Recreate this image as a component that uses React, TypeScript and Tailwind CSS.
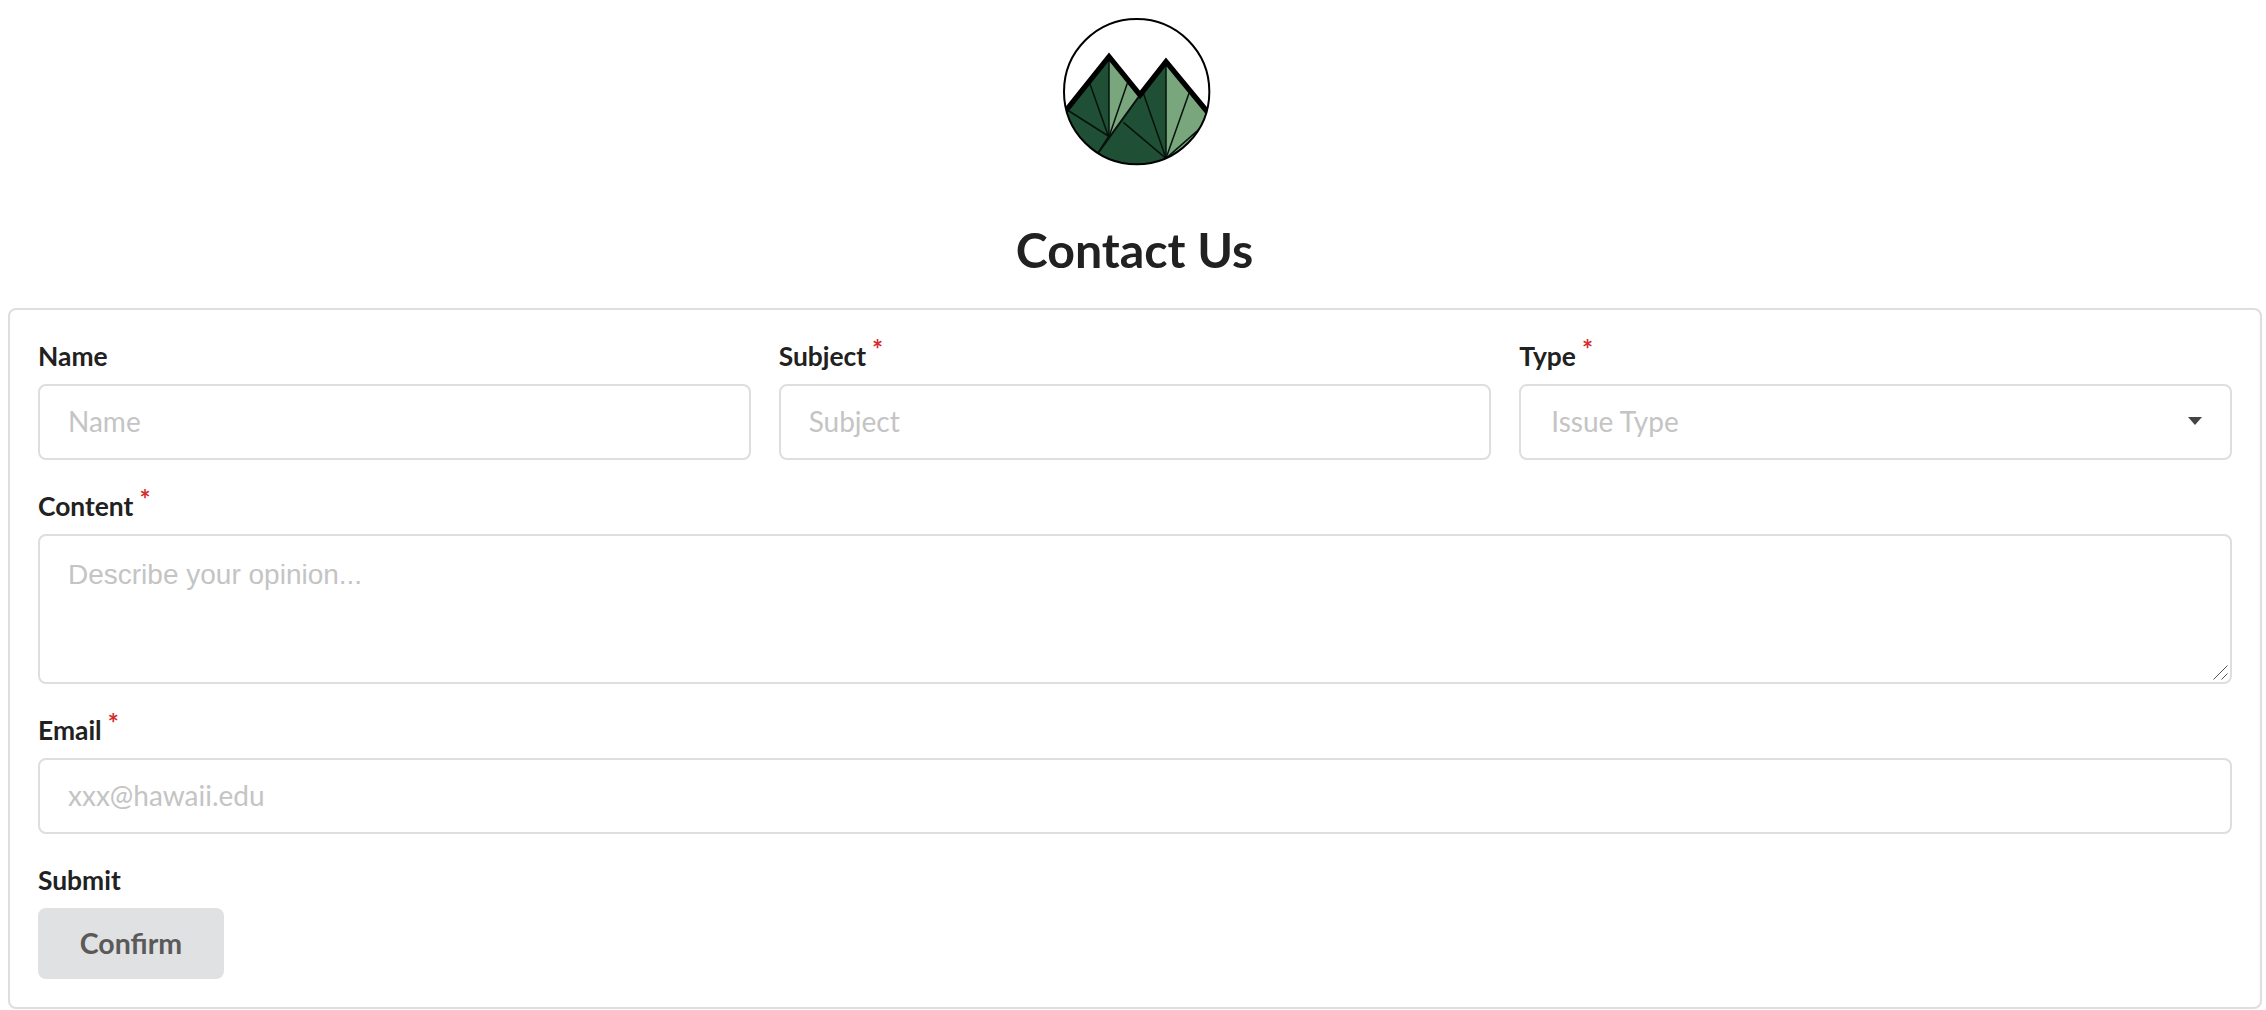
import React from 'react';

const Logo = () => (
    <svg width="180" height="180" viewBox="9 0 540 540" className="block">
        <defs>
            <clipPath id="logoClip">
                <circle cx="290" cy="275" r="218" />
            </clipPath>
        </defs>
        <g clipPath="url(#logoClip)">
            <polygon points="60,350 85,325 207,170 300,285 378,185 500,335 530,360 530,520 60,520" fill="#1f4f35" />
            <polygon points="207,170 300,285 207,410" fill="#79a67d" />
            <polygon points="378,185 520,355 520,420 378,475" fill="#79a67d" />
            <g stroke="#06120c" strokeWidth="4.5" fill="none">
                <line x1="207" y1="170" x2="207" y2="410" />
                <line x1="150" y1="252" x2="205" y2="408" />
                <line x1="82" y1="330" x2="205" y2="408" />
                <line x1="262" y1="250" x2="207" y2="410" />
                <line x1="207" y1="408" x2="175" y2="458" strokeWidth="5" />
                <line x1="300" y1="285" x2="175" y2="458" strokeWidth="6" />
                <line x1="250" y1="367" x2="378" y2="475" />
                <line x1="310" y1="280" x2="378" y2="475" />
                <line x1="378" y1="185" x2="378" y2="475" />
                <line x1="447" y1="280" x2="378" y2="475" />
                <line x1="500" y1="368" x2="378" y2="475" />
            </g>
            <polyline points="75,335 207,170 300,285 378,185 510,345" stroke="#000" strokeWidth="16" fill="none" strokeLinejoin="miter" />
        </g>
        <circle cx="290" cy="275" r="218" stroke="#000" strokeWidth="6" fill="none" />
    </svg>
);

const FieldLabel = ({ text, required }: { text: string; required?: boolean }) => (
    <label className="block h-[30px] mb-[12px] text-[26.4px] leading-[28px] font-bold text-[#212121]">
        {text}
        {required && <span className="relative -top-[7px] ml-[6px] text-[26px] font-bold text-[#d12f2f]">*</span>}
    </label>
);

const inputClass = "block w-full h-[76px] px-[28px] pb-[2px] border-2 border-[#dedede] rounded-[8px] bg-white text-[28px] outline-none placeholder:text-[#c4c4c4]";

export default function App() {
    return (
        <div className="min-h-[1010px] bg-white font-['Lato',sans-serif] overflow-hidden">
            <div className="flex justify-center">
                <Logo />
            </div>
            <h2 className="mt-[37px] text-center text-[48.3px] leading-[64px] font-bold text-[#212121] ml-[3px]">Contact Us</h2>
            <form className="mt-[27px] ml-[8px] w-[2254px] h-[701px] px-[28px] pt-[32px] border-2 border-[#dedede] rounded-[8px]">
                <div className="grid grid-cols-3 gap-x-[28px]">
                    <div>
                        <FieldLabel text="Name" />
                        <input className={inputClass} placeholder="Name" />
                    </div>
                    <div>
                        <FieldLabel text="Subject" required />
                        <input className={inputClass} placeholder="Subject" />
                    </div>
                    <div>
                        <FieldLabel text="Type" required />
                        <div className="flex items-center justify-between h-[76px] pl-[30px] pr-[28px] pb-[2px] border-2 border-[#dedede] rounded-[8px] text-[28px] text-[#c4c4c4]">
                            <span>Issue Type</span>
                            <span className="w-0 h-0 border-x-[7px] border-t-[8px] border-x-transparent border-t-[#444444]" />
                        </div>
                    </div>
                </div>
                <div className="mt-[32px]">
                    <FieldLabel text="Content" required />
                    <div className="relative">
                        <textarea
                            className="block w-full h-[150px] px-[28px] pt-[21px] pb-[19px] border-2 border-[#dedede] rounded-[8px] font-['Liberation_Sans',sans-serif] text-[28px] leading-[36px] outline-none resize-none placeholder:text-[#c4c4c4]"
                            placeholder="Describe your opinion..."
                        />
                        <svg width="15" height="15" viewBox="0 0 15 15" className="absolute right-[4px] bottom-[4px]">
                            <line x1="0.5" y1="14.5" x2="14.5" y2="0.5" stroke="#555555" strokeWidth="1" />
                            <line x1="8.5" y1="14.5" x2="14.5" y2="8.5" stroke="#555555" strokeWidth="1" />
                        </svg>
                    </div>
                </div>
                <div className="mt-[32px]">
                    <FieldLabel text="Email" required />
                    <input className={inputClass} placeholder="xxx@hawaii.edu" />
                </div>
                <div className="mt-[32px]">
                    <FieldLabel text="Submit" />
                    <button type="button" className="block w-[186px] h-[71px] rounded-[8px] bg-[#e0e1e2] text-[28.5px] font-bold text-[#5a5a5a]">Confirm</button>
                </div>
            </form>
        </div>
    );
}
